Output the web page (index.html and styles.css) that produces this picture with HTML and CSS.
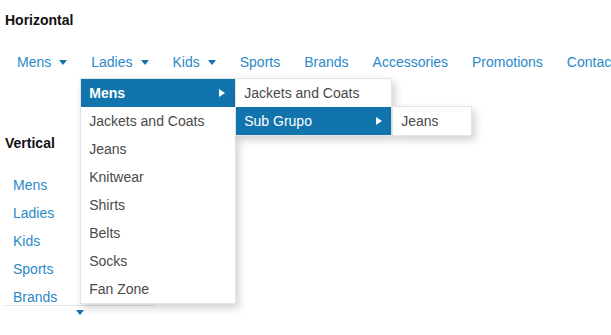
FILE: index.html
```html
<!DOCTYPE html>
<html lang="en">
<head>
    <meta charset="UTF-8">
    <title>Menu</title>
    <link rel="stylesheet" href="styles.css">
</head>
<body>

    <h4 class="title">Horizontal</h4>

    <ul class="menu-h">
        <li class="menu-item">Mens<span class="arrow-down"></span></li>
        <li class="menu-item open">Ladies<span class="arrow-down"></span>
            <ul class="popup popup-main">
                <li class="popup-item active">Mens<span class="arrow-right"></span>
                    <ul class="popup popup-sub">
                        <li class="popup-item">Jackets and Coats</li>
                        <li class="popup-item active">Sub Grupo<span class="arrow-right"></span>
                            <ul class="popup popup-sub popup-last">
                                <li class="popup-item">Jeans</li>
                            </ul>
                        </li>
                    </ul>
                </li>
                <li class="popup-item">Jackets and Coats</li>
                <li class="popup-item">Jeans</li>
                <li class="popup-item">Knitwear</li>
                <li class="popup-item">Shirts</li>
                <li class="popup-item">Belts</li>
                <li class="popup-item">Socks</li>
                <li class="popup-item">Fan Zone</li>
            </ul>
        </li>
        <li class="menu-item">Kids<span class="arrow-down"></span></li>
        <li class="menu-item">Sports</li>
        <li class="menu-item">Brands</li>
        <li class="menu-item">Accessories</li>
        <li class="menu-item">Promotions</li>
        <li class="menu-item">Contact</li>
    </ul>

    <h4 class="title title-v">Vertical</h4>

    <div class="menu-v">
        <ul class="menu-v-list">
            <li class="menu-v-item">Mens</li>
            <li class="menu-v-item">Ladies</li>
            <li class="menu-v-item">Kids</li>
            <li class="menu-v-item">Sports</li>
            <li class="menu-v-item">Brands</li>
        </ul>
        <div class="scroll-btn"><span class="arrow-scroll"></span></div>
    </div>

</body>
</html>
```

FILE: styles.css
```css
:root {
    --linkColor: #2b89c8;
    --activeColor: #1274ac;
    --textColor: #4a4a4a;
    --borderColor: #e4e4e4;
}
body {
    margin: 0;
    padding: 0 5px;
    font-family: "Liberation Sans", Arial, sans-serif;
    font-size: 14px;
    color: var(--textColor);
    background: #fff;
    overflow: hidden;
}
ul {
    list-style: none;
    margin: 0;
    padding: 0;
}
.title {
    margin: 12px 0 0;
    font-size: 14px;
    line-height: 16px;
    font-weight: bold;
    color: #111;
}
.menu-h {
    display: flex;
    margin-top: 17px;
    white-space: nowrap;
}
.menu-item {
    position: relative;
    display: flex;
    align-items: center;
    padding: 3px 12px 3px;
    line-height: 28px;
    color: var(--linkColor);
}
.arrow-down {
    margin-left: 8px;
    width: 0;
    height: 0;
    border-left: 4px solid transparent;
    border-right: 4px solid transparent;
    border-top: 5px solid var(--activeColor);
    margin-top: 1px;
}
.popup {
    position: absolute;
    background: #fff;
    border: 1px solid var(--borderColor);
    box-shadow: 3px 4px 8px rgba(0, 0, 0, 0.18);
    z-index: 10;
}
.popup-main {
    top: calc(100% - 1px);
    left: 1px;
    width: 154px;
}
.popup-sub {
    top: -1px;
    left: 100%;
    font-weight: normal;
}
.popup-last {
    left: 156px;
}
.popup-item {
    position: relative;
    display: flex;
    align-items: center;
    justify-content: space-between;
    padding: 0 10px 0 8px;
    line-height: 28px;
    color: var(--textColor);
    white-space: nowrap;
}
.popup-sub .popup-item {
    padding-right: 32px;
}
.popup-item.active {
    background: var(--activeColor);
    color: #fff;
    font-weight: bold;
}
.popup-sub .popup-item.active {
    padding-right: 9px;
    font-weight: normal;
}
.arrow-right {
    width: 0;
    height: 0;
    border-top: 4px solid transparent;
    border-bottom: 4px solid transparent;
    border-left: 6px solid #fff;
    margin-left: 8px;
}
.title-v {
    margin-top: 56px;
}
.menu-v {
    width: 150px;
    margin-top: 20px;
}
.menu-v-list {
    height: 134px;
    overflow: hidden;
    border-bottom: 1px solid var(--borderColor);
}
.menu-v-item {
    padding-left: 8px;
    line-height: 28px;
    color: var(--linkColor);
}
.scroll-btn {
    display: flex;
    justify-content: center;
    padding-top: 4px;
}
.arrow-scroll {
    width: 0;
    height: 0;
    border-left: 4px solid transparent;
    border-right: 4px solid transparent;
    border-top: 5px solid var(--activeColor);
}
```
